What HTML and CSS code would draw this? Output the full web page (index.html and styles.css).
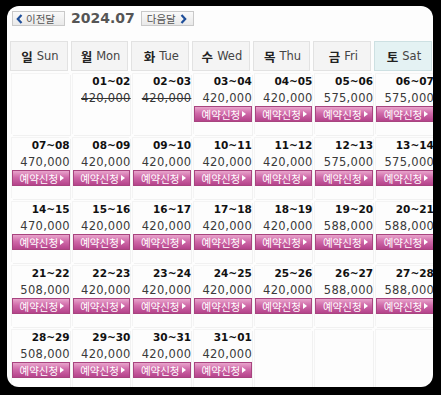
FILE: index.html
```html
<!DOCTYPE html>
<html lang="ko">
<head>
<meta charset="utf-8">
<link rel="stylesheet" href="styles.css">
</head>
<body>
<div class="panel">
  <div class="nav">
    <a class="navbtn"><svg class="chev" width="7" height="10" viewBox="0 0 7 10"><polyline points="5.5,1 1.8,5 5.5,9" fill="none" stroke="#1f4f9a" stroke-width="2.2"/></svg>이전달</a>
    <span class="month">2024.07</span>
    <a class="navbtn next">다음달<svg class="chev" width="7" height="10" viewBox="0 0 7 10"><polyline points="1.5,1 5.2,5 1.5,9" fill="none" stroke="#1f4f9a" stroke-width="2.2"/></svg></a>
  </div>
  <div class="head">
    <div class="hc"><b>일</b> Sun</div>
    <div class="hc"><b>월</b> Mon</div>
    <div class="hc"><b>화</b> Tue</div>
    <div class="hc"><b>수</b> Wed</div>
    <div class="hc"><b>목</b> Thu</div>
    <div class="hc"><b>금</b> Fri</div>
    <div class="hc sat"><b>토</b> Sat</div>
  </div>
  <div class="days">
    <div class="dc"></div>
    <div class="dc"><div class="dt">01~02</div><div class="pr off">420,000</div></div>
    <div class="dc"><div class="dt">02~03</div><div class="pr off">420,000</div></div>
    <div class="dc"><div class="dt">03~04</div><div class="pr">420,000</div><a class="bk">예약신청<i></i></a></div>
    <div class="dc"><div class="dt">04~05</div><div class="pr">420,000</div><a class="bk">예약신청<i></i></a></div>
    <div class="dc"><div class="dt">05~06</div><div class="pr">575,000</div><a class="bk">예약신청<i></i></a></div>
    <div class="dc"><div class="dt">06~07</div><div class="pr">575,000</div><a class="bk">예약신청<i></i></a></div>

    <div class="dc"><div class="dt">07~08</div><div class="pr">470,000</div><a class="bk">예약신청<i></i></a></div>
    <div class="dc"><div class="dt">08~09</div><div class="pr">420,000</div><a class="bk">예약신청<i></i></a></div>
    <div class="dc"><div class="dt">09~10</div><div class="pr">420,000</div><a class="bk">예약신청<i></i></a></div>
    <div class="dc"><div class="dt">10~11</div><div class="pr">420,000</div><a class="bk">예약신청<i></i></a></div>
    <div class="dc"><div class="dt">11~12</div><div class="pr">420,000</div><a class="bk">예약신청<i></i></a></div>
    <div class="dc"><div class="dt">12~13</div><div class="pr">575,000</div><a class="bk">예약신청<i></i></a></div>
    <div class="dc"><div class="dt">13~14</div><div class="pr">575,000</div><a class="bk">예약신청<i></i></a></div>

    <div class="dc"><div class="dt">14~15</div><div class="pr">470,000</div><a class="bk">예약신청<i></i></a></div>
    <div class="dc"><div class="dt">15~16</div><div class="pr">420,000</div><a class="bk">예약신청<i></i></a></div>
    <div class="dc"><div class="dt">16~17</div><div class="pr">420,000</div><a class="bk">예약신청<i></i></a></div>
    <div class="dc"><div class="dt">17~18</div><div class="pr">420,000</div><a class="bk">예약신청<i></i></a></div>
    <div class="dc"><div class="dt">18~19</div><div class="pr">420,000</div><a class="bk">예약신청<i></i></a></div>
    <div class="dc"><div class="dt">19~20</div><div class="pr">588,000</div><a class="bk">예약신청<i></i></a></div>
    <div class="dc"><div class="dt">20~21</div><div class="pr">588,000</div><a class="bk">예약신청<i></i></a></div>

    <div class="dc"><div class="dt">21~22</div><div class="pr">508,000</div><a class="bk">예약신청<i></i></a></div>
    <div class="dc"><div class="dt">22~23</div><div class="pr">420,000</div><a class="bk">예약신청<i></i></a></div>
    <div class="dc"><div class="dt">23~24</div><div class="pr">420,000</div><a class="bk">예약신청<i></i></a></div>
    <div class="dc"><div class="dt">24~25</div><div class="pr">420,000</div><a class="bk">예약신청<i></i></a></div>
    <div class="dc"><div class="dt">25~26</div><div class="pr">420,000</div><a class="bk">예약신청<i></i></a></div>
    <div class="dc"><div class="dt">26~27</div><div class="pr">588,000</div><a class="bk">예약신청<i></i></a></div>
    <div class="dc"><div class="dt">27~28</div><div class="pr">588,000</div><a class="bk">예약신청<i></i></a></div>

    <div class="dc"><div class="dt">28~29</div><div class="pr">508,000</div><a class="bk">예약신청<i></i></a></div>
    <div class="dc"><div class="dt">29~30</div><div class="pr">420,000</div><a class="bk">예약신청<i></i></a></div>
    <div class="dc"><div class="dt">30~31</div><div class="pr">420,000</div><a class="bk">예약신청<i></i></a></div>
    <div class="dc"><div class="dt">31~01</div><div class="pr">420,000</div><a class="bk">예약신청<i></i></a></div>
    <div class="dc"></div>
    <div class="dc"></div>
    <div class="dc"></div>
  </div>
</div>
</body>
</html>
```
FILE: styles.css
```css
html, body {
  margin: 0;
  padding: 0;
  background: #000;
}
body {
  width: 441px;
  height: 395px;
  overflow: hidden;
  font-family: "DejaVu Sans", "Noto Sans CJK KR", sans-serif;
  color: #222;
}
.panel {
  margin: 6px 0 0 7px;
  width: 426px;
  height: 381px;
  background: #fdfdfd;
  border-radius: 12px;
  overflow: hidden;
  box-sizing: border-box;
  padding: 5px 0 0 3px;
}
.nav {
  display: flex;
  align-items: center;
  height: 15px;
  padding-left: 2px;
  margin-bottom: 15px;
}
.navbtn {
  display: flex;
  align-items: center;
  gap: 3px;
  box-sizing: border-box;
  height: 15px;
  padding: 0 4px 0 3px;
  border: 1px solid #c9c9c9;
  background: linear-gradient(#fafafa, #e9e9e9);
  font-family: "Noto Sans CJK KR", sans-serif;
  font-size: 10.5px;
  color: #555;
  width: 53px;
}
.navbtn.next {
  padding: 0 3px 0 5px;
  gap: 4px;
}
.chev { flex: none; }
.month {
  font-family: "DejaVu Sans", sans-serif;
  font-weight: bold;
  font-size: 14px;
  color: #555;
  margin: 0 6px 0 6px;
  line-height: 15px;
}
.head {
  display: grid;
  grid-template-columns: repeat(7, 57.7px);
  column-gap: 3px;
}
.hc {
  box-sizing: border-box;
  height: 30px;
  border: 1px solid #e2e2e2;
  background: #f4f4f4;
  display: flex;
  align-items: center;
  justify-content: center;
  gap: 4px;
  font-family: "DejaVu Sans", sans-serif;
  font-size: 11.5px;
  color: #444;
  white-space: nowrap;
  padding-left: 2px;
}
.hc b {
  font-family: "Noto Sans CJK KR", sans-serif;
  font-weight: bold;
  font-size: 12.5px;
  color: #222;
}
.hc.sat {
  background: #e4f2f3;
  border-color: #cde0e2;
}
.days {
  display: grid;
  grid-template-columns: repeat(7, 57.7px);
  grid-auto-rows: 61px;
  column-gap: 3px;
  row-gap: 3px;
  margin-top: 3px;
  margin-left: 2px;
}
.dc {
  box-sizing: border-box;
  display: flex;
  flex-direction: column;
  align-items: stretch;
  text-align: right;
  box-shadow: 1px 1px 0 #f1f1f1, -1px -1px 0 #f4f4f4;
}
.dt {
  font-weight: bold;
  font-size: 10.5px;
  line-height: 14px;
  color: #111;
  margin-top: 0;
}
.pr {
  font-size: 11.5px;
  line-height: 16px;
  margin-top: 2px;
  color: #3a3a3a;
  letter-spacing: 0.3px;
  margin-right: -0.3px;
}
.pr.off {
  color: #333;
  text-decoration: line-through;
  text-decoration-thickness: 1px;
}
.bk {
  box-sizing: border-box;
  height: 16px;
  display: flex;
  align-items: center;
  justify-content: center;
  gap: 2px;
  background: linear-gradient(#e8a4cc 0%, #d06aa9 45%, #b5438b 100%);
  border: 1px solid #a8447f;
  font-family: "Noto Sans CJK KR", sans-serif;
  font-size: 10.5px;
  color: #fff;
  text-align: center;
  padding-left: 2px;
}
.bk i {
  width: 0;
  height: 0;
  border-left: 4px solid #fff;
  border-top: 3.5px solid transparent;
  border-bottom: 3.5px solid transparent;
}
```
